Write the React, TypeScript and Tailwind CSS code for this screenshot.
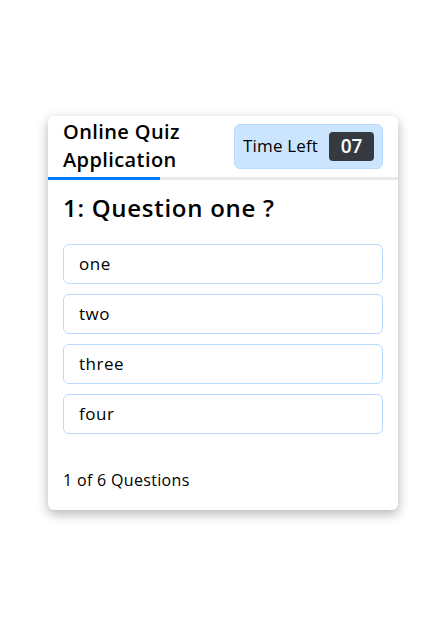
const options = ["one", "two", "three", "four"];

export default function App() {
  return (
    <div className="flex h-screen w-full items-center justify-center bg-white font-['Open_Sans',sans-serif] text-[#212529]">
      <div className="w-[350px] overflow-hidden rounded-md bg-white shadow-[0_4px_12px_rgba(0,0,0,0.3)]">
        <div className="flex h-[61px] items-center justify-between px-[15px]">
          <h1 className="w-[150px] text-[20px] font-semibold leading-[28px] tracking-[0.02em] text-black">Online Quiz Application</h1>
          <div className="flex h-[45px] w-[149px] items-center justify-between rounded-md border border-[#b8daff] bg-[#cce5ff] pl-[8px] pr-[8px]">
            <span className="text-[17px] tracking-[0.01em] text-black">Time Left</span>
            <span className="flex h-[29px] w-[45px] items-center justify-center rounded bg-[#343a40] text-[19px] font-semibold text-white">07</span>
          </div>
        </div>
        <div className="h-[3px] w-full bg-[#e9e9e9]">
          <div className="h-full w-[32%] bg-[#007bff]" />
        </div>
        <div className="px-[15px] pt-[13px]">
          <h2 className="mb-[22px] text-[24px] font-semibold leading-[29px] tracking-[0.03em] text-black">1: Question one ?</h2>
          <div className="flex flex-col gap-[10px]">
            {options.map((o) => (
              <button key={o} className="flex h-[40px] items-center rounded-md border border-[#b8daff] bg-white px-[15px] text-left text-[17px] tracking-[0.03em] text-black">
                {o}
              </button>
            ))}
          </div>
        </div>
        <div className="px-[15px] pb-[18px] pt-[34px] text-[16px] leading-[24px] tracking-[0.02em] text-black">
          <span className="font-medium">1</span> of <span className="font-medium">6</span> Questions
        </div>
      </div>
    </div>
  );
}
